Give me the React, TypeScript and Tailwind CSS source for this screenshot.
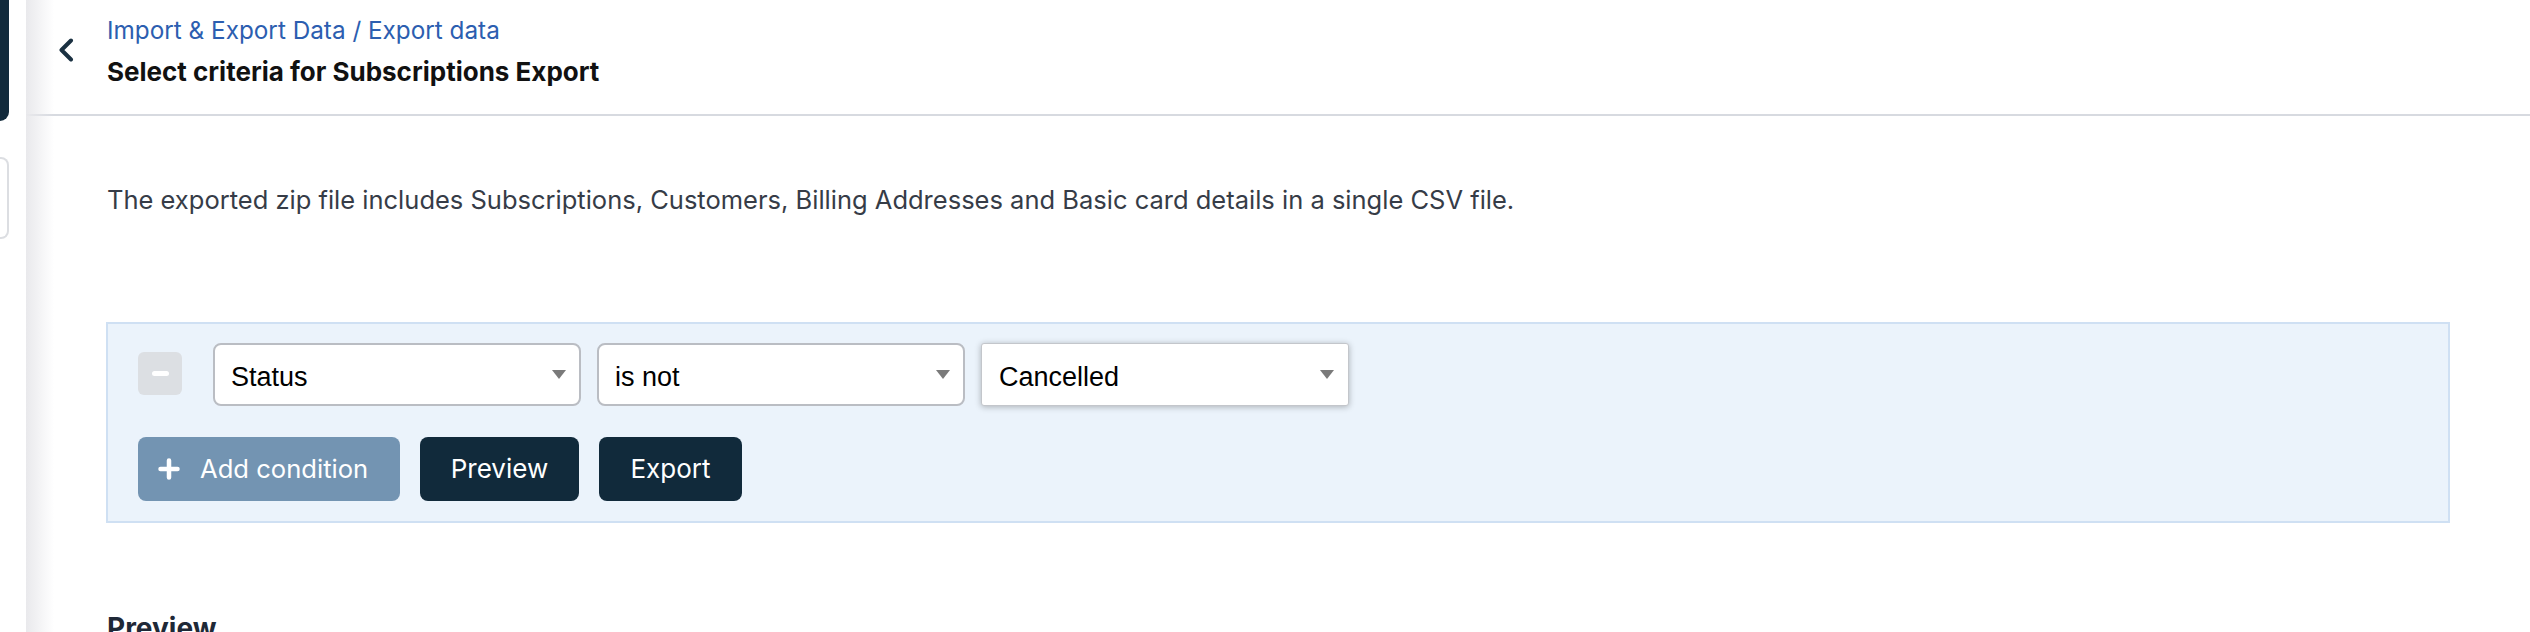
import React from "react";

function Chevron() {
  return (
    <svg width="16" height="24" viewBox="0 0 16 24" className="shrink-0 mt-[26px] ml-[32px]">
      <path d="M13 2.5 L3.5 12 L13 21.5" fill="none" stroke="#1b3142" strokeWidth="4" strokeLinecap="round" strokeLinejoin="round" />
    </svg>
  );
}

function Caret() {
  return (
    <svg width="14" height="9" viewBox="0 0 14 9" className="shrink-0">
      <polygon points="0,0 14,0 7,9" fill="#7a7a7a" />
    </svg>
  );
}

function Select({ label, focused }: { label: string; focused?: boolean }) {
  return (
    <div
      className={
        focused
          ? "w-[368px] h-[63px] bg-white border-[1.5px] border-[#c3c6cb] rounded-[3px] shadow-[0_1px_6px_rgba(0,0,0,0.28)] flex items-center justify-between pl-[17px] pr-[14px]"
          : "w-[368px] h-[63px] bg-white border-2 border-[#babdc3] rounded-[8px] flex items-center justify-between pl-[16px] pr-[13px]"
      }
    >
      <span className="pt-[5px] font-['Liberation_Sans',Arial,sans-serif] text-[27px] leading-none text-black">{label}</span>
      <Caret />
    </div>
  );
}

export default function App() {
  return (
    <div className="flex w-[2530px] h-[632px] overflow-hidden bg-white font-['Inter',sans-serif]">
      <aside className="w-[26px] shrink-0 flex flex-col bg-white">
        <div className="w-[9px] h-[121px] bg-[#122a3b] rounded-br-[12px]" />
        <div className="mt-[36px] w-[9px] h-[82px] border-2 border-l-0 border-[#dcdee2] rounded-r-[8px]" />
      </aside>
      <main className="relative flex-1 flex flex-col">
        <div className="pointer-events-none absolute inset-y-0 left-0 w-[28px] bg-gradient-to-r from-[#e9e9ec] to-transparent" />
        <header className="h-[116px] shrink-0 border-b-2 border-[#d7dae0] flex items-start pt-[12px]">
          <Chevron />
          <div className="ml-[33px] flex flex-col">
            <div className="text-[24.3px] leading-[36px] text-[#2c5eb0]">Import &amp; Export Data / Export data</div>
            <div className="text-[26px] leading-[36px] font-bold text-[#111111] mt-[6px]">Select criteria for Subscriptions Export</div>
          </div>
        </header>
        <section className="px-[80px] pt-[65px] flex flex-col">
          <p className="pl-[1px] text-[25.5px] leading-[37px] text-[#363c47]">
            The exported zip file includes Subscriptions, Customers, Billing Addresses and Basic card details in a single CSV file.
          </p>
          <div className="mt-[104px] border-2 border-[#cfe0f3] bg-[#ebf3fb] pl-[30px] pt-[19px] pb-[20px] flex flex-col gap-[31px]">
            <div className="flex items-center">
              <div className="w-[44px] h-[43px] rounded-[6px] bg-[#dcdfe3] flex items-center justify-center -mt-[3px]">
                <div className="w-[17px] h-[5px] rounded-full bg-white" />
              </div>
              <div className="ml-[31px] flex items-center gap-[16px]">
                <Select label="Status" />
                <Select label="is not" />
                <Select label="Cancelled" focused />
              </div>
            </div>
            <div className="flex items-center gap-[20px]">
              <button className="h-[64px] w-[262px] rounded-[8px] bg-[#7394b2] flex items-center pl-[20px] text-white">
                <svg width="22" height="22" viewBox="0 0 22 22" className="shrink-0">
                  <path d="M11 2.5 V19.5 M2.5 11 H19.5" stroke="white" strokeWidth="4.5" strokeLinecap="round" />
                </svg>
                <span className="ml-[20px] text-[25.6px] leading-none">Add condition</span>
              </button>
              <button className="h-[64px] w-[159px] rounded-[8px] bg-[#112a3b] text-white text-[26px] leading-none flex items-center justify-center">
                Preview
              </button>
              <button className="h-[64px] w-[143px] rounded-[8px] bg-[#112a3b] text-white text-[26px] leading-none flex items-center justify-center">
                Export
              </button>
            </div>
          </div>
          <h2 className="mt-[85px] pl-[1px] text-[28px] leading-[40px] font-bold text-[#1f2937]">Preview</h2>
        </section>
      </main>
    </div>
  );
}
